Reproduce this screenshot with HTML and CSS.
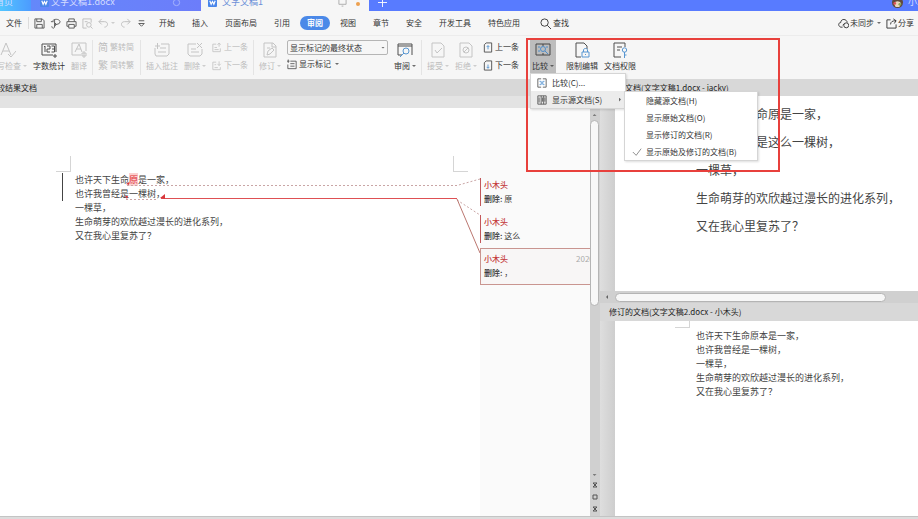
FILE: index.html
```html
<!DOCTYPE html>
<html lang="zh-CN">
<head>
<meta charset="utf-8">
<title>文字文稿1</title>
<link rel="stylesheet" href="styles.css">
</head>
<body>
<svg class="defs" aria-hidden="true">
  <symbol id="wdoc" viewBox="0 0 10 10"><rect width="10" height="10" rx="1" fill="#4a86ea" stroke="none"/><path d="M2 3l1.500 4L5 4l1.500 3L8 3" fill="none" stroke="#fff" stroke-width="1.300"/></symbol>
  <symbol id="prev" viewBox="0 0 12 12"><path d="M5 2H1v9h9V7M3 6h3M3 8.500h5M8.500 5V1M6.500 2.500l2-1.700 2 1.700"/></symbol>
  <symbol id="next" viewBox="0 0 12 12"><path d="M5 2H1v9h9V8M3 5h2M3 8.500h4M8.500 1v5M6.500 4l2 2 2-2"/></symbol>
  <symbol id="pageprev" viewBox="0 0 10 12"><path d="M3 1h6v10H1V3z"/><path d="M5 8V4M3.500 5.500L5 4l1.500 1.500" class="blue"/></symbol>
  <symbol id="pagenext" viewBox="0 0 10 12"><path d="M3 1h6v10H1V3z"/><path d="M5 5v4M3.500 7.500L5 9l1.500-1.500" class="blue"/></symbol>
</svg>

<header class="titlebar">
  <a class="home" href="#">首页</a>
  <a class="doctab" href="#"><svg class="i9"><use href="#wdoc"/></svg><span>文字文稿1.docx</span><svg class="i9 end" viewBox="0 0 10 10"><circle cx="5" cy="5" r="3.500"/></svg></a>
  <a class="doctab current" href="#"><svg class="i9"><use href="#wdoc"/></svg><span>文字文稿1</span><svg class="i9 end" viewBox="0 0 10 10"><path d="M1 1h8v6H1zM4 9h2"/></svg><i class="dot"></i></a>
  <button class="plus" aria-label="新建"><svg viewBox="0 0 10 10"><path d="M5 0v10M0 5h10"/></svg></button>
  <div class="user"><svg viewBox="0 0 12 12"><circle cx="6" cy="6" r="6" fill="#604a3c"/><path d="M2 7c2-3 6-3 8 0l-2 4H4z" fill="#e9d7bd"/><circle cx="3" cy="7" r="1.500" fill="#d9525a"/><circle cx="8.500" cy="8" r="1.500" fill="#88a452"/></svg><span>小木头</span></div>
</header>

<nav class="menubar">
  <a class="file" href="#"><svg class="i9" viewBox="0 0 10 10"><path d="M0 1.500h8M0 5h8M0 8.500h8"/></svg>文件</a>
  <div class="quick">
    <button aria-label="保存"><svg viewBox="0 0 12 12"><path d="M1 1h8l2 2v8H1zM3 1v3h5V1M3 11V7h6v4"/></svg></button>
    <button aria-label="输出"><svg viewBox="0 0 12 12"><path d="M3 3c1-2 7-2.500 8 1 0 3-4 3-6 3M5 2v8c-1 2-3 1-3-1M1 4h3M5 5l2 2-2 2"/></svg></button>
    <button aria-label="打印"><svg viewBox="0 0 12 12"><path d="M3 4V1h6v3M3 9H1V4h10v5H9M3 7h6v4H3z"/></svg></button>
    <button class="dim" aria-label="预览"><svg viewBox="0 0 12 12"><path d="M5 11H1V1h9v4M3 4h3"/><circle cx="7.500" cy="7.500" r="2.500"/><path d="M9.500 9.500l2 2"/></svg></button>
    <button class="dim undo" aria-label="撤销"><svg viewBox="0 0 12 12"><path d="M4 1L1 4l3 3M1 4h6c5 0 4 6 0 6"/></svg><i class="caret"></i></button>
    <button class="dim" aria-label="恢复"><svg viewBox="0 0 12 12"><path d="M8 1l3 3-3 3M11 4H5c-5 0-4 6 0 6"/></svg></button>
    <button class="more" aria-label="更多"><svg viewBox="0 0 12 12"><path d="M3 3h6M3 6l3 3 3-3z"/></svg></button>
  </div>
  <div class="tabs">
    <a href="#">开始</a><a href="#">插入</a><a href="#">页面布局</a><a href="#">引用</a><a href="#" class="on">审阅</a><a href="#">视图</a><a href="#">章节</a><a href="#">安全</a><a href="#">开发工具</a><a href="#">特色应用</a>
  </div>
  <button class="find"><svg viewBox="0 0 12 12"><circle cx="5" cy="5" r="4"/><path d="M8 8l4 4"/></svg>查找</button>
  <div class="share">
    <button><svg viewBox="0 0 12 12"><path d="M5 10H3C0 9 0 5 3 5c0-5 7-4 7 0"/><circle cx="9" cy="8" r="2.700"/><path d="M5 8l2-2"/></svg>未同步<i class="caret"></i></button>
    <button><svg viewBox="0 0 12 12"><path d="M5 2H1v9h10V7M5 7c0-3 2-4 6-4M8 1l3 2-2 3"/></svg>分享</button>
  </div>
</nav>

<section class="ribbon">
  <div class="group first">
    <button class="big dim"><svg viewBox="0 0 16 16"><path d="M1 13L6 1l5 12M3 9h6M8 12l3 3 5-6"/></svg><span>拼写检查<i class="caret"></i></span></button>
    <button class="big"><svg viewBox="0 0 16 16"><path d="M12 13H1V2h14v8M3 5l1-1v6M6 4h3v3H6v3h3M10.500 4h3v6h-3M11 7h2M14 12v4M12 14h4"/></svg><span>字数统计</span></button>
    <button class="big dim"><svg viewBox="0 0 16 16"><path d="M10 13H1V1h14v8M4 10l4-8 3 8M5 7h5M11 11h4v3h-4zM13 9v7"/></svg><span>翻译</span></button>
  </div>
  <div class="group stack">
    <button class="small dim"><b>简</b>繁转简</button>
    <button class="small dim"><b>繁</b>简转繁</button>
  </div>
  <div class="group">
    <button class="big dim"><svg viewBox="0 0 16 16"><path d="M7 2h8v10l-2 2H2l-1-2V6M1 4h5M3.500 1v6M6 6h6M4 10h8"/></svg><span>插入批注</span></button>
    <button class="big dim"><svg viewBox="0 0 16 16"><path d="M9 2H1v10l2 2h10l2-2V7M4 7h5M4 10h8M10 1l5 5M15 1l-5 5"/></svg><span>删除<i class="caret"></i></span></button>
    <div class="stack">
      <button class="small dim"><svg><use href="#prev"/></svg>上一条</button>
      <button class="small dim"><svg><use href="#next"/></svg>下一条</button>
    </div>
  </div>
  <div class="group">
    <button class="big dim"><svg viewBox="0 0 16 16"><path d="M2 1h9l3 3v11H2zM10 1v4h4M5 13l1-4 4-3 2 2-4 4zM5 6h3"/></svg><span>修订<i class="caret"></i></span></button>
    <div class="stack markup">
      <div class="pick"><select aria-label="标记状态"><option>显示标记的最终状态</option></select><i class="caret"></i></div>
      <button class="small"><svg viewBox="0 0 12 12"><path d="M4 2h7v9H1V6M0 2h3M1.500 0v4M4 5h5M4 8h5"/></svg>显示标记<i class="caret"></i></button>
    </div>
    <button class="big"><svg viewBox="0 0 16 16"><path d="M5 13H1V2h14v11M1 4h14"/><circle cx="9" cy="9" r="3" class="blue"/><path d="M7 11l-4 4" class="blue"/></svg><span>审阅<i class="caret"></i></span></button>
  </div>
  <div class="group last">
    <button class="big dim"><svg viewBox="0 0 16 16"><path d="M2 1h9l3 3v11H2zM5 8l2 3 5-5"/></svg><span>接受<i class="caret"></i></span></button>
    <button class="big dim"><svg viewBox="0 0 16 16"><path d="M2 1h9l3 3v11H2z"/><circle cx="8" cy="8" r="3"/><path d="M6 10l4-4"/></svg><span>拒绝<i class="caret"></i></span></button>
    <div class="stack">
      <button class="small"><svg><use href="#pageprev"/></svg>上一条</button>
      <button class="small"><svg><use href="#pagenext"/></svg>下一条</button>
    </div>
  </div>
  <div class="compare">
    <button class="big pressed"><svg viewBox="0 0 16 16"><path d="M1 2h14v11H1zM8 2v2M8 11v2"/><circle cx="8" cy="7" r="2.500" class="blue"/><path d="M10 9l3 3M3 5h2M3 9h2M11 5h2" class="blue"/></svg><span>比较<i class="caret"></i></span></button>
    <div class="menu main-menu">
      <button><svg viewBox="0 0 12 12"><path d="M5 1H1v10h4M7 1h4v10H7"/><path d="M3 4h2v4H3M9 4H7v4h2M5 6h2" class="blue"/></svg>比较(C)...</button>
      <button class="hot"><svg viewBox="0 0 12 12"><path d="M1 1h10v10H1zM5 1v10M8 1v10M2.500 3v6M6.500 3v5M9.500 3v5"/></svg>显示源文档(S)<i class="caret side"></i></button>
    </div>
    <div class="menu sub-menu">
      <button>隐藏源文档(H)</button>
      <button>显示原始文档(O)</button>
      <button>显示修订的文档(R)</button>
      <button><svg viewBox="0 0 12 12"><path d="M1 6l4 4 6-8"/></svg>显示原始及修订的文档(B)</button>
    </div>
    <div class="highlight"></div>
  </div>
  <div class="group tail">
    <button class="big"><svg viewBox="0 0 16 16"><path d="M7 15H2V1h8l3 3v3"/><path d="M8 10h7v5H8zM9.500 10V8c0-2 4-2 4 0v2M11.500 12v1" class="blue"/></svg><span>限制编辑</span></button>
    <button class="big"><svg viewBox="0 0 16 16"><path d="M9 15H2V1h11v4M5 5h5M5 8h3"/><circle cx="12.500" cy="8" r="2.200" class="blue"/><path d="M12.500 10v6M12.500 13h2" class="blue"/></svg><span>文档权限</span></button>
  </div>
</section>

<main class="work">
  <section class="result">
    <h2>比较结果文档</h2>
    <div class="ruler"></div>
    <div class="canvas">
      <article class="page">
        <div class="corners"><i></i><i></i></div>
        <div class="text changed">
          <p>也许天下生命<del>原</del>是一家，</p>
          <p>也许我曾经是一棵树，</p>
        </div>
        <div class="text">
          <p>一棵草，</p>
          <p>生命萌芽的欢欣越过漫长的进化系列，</p>
          <p>又在我心里复苏了？</p>
        </div>
      </article>
      <aside class="notes">
        <div class="note"><div><strong>小木头</strong><p><b>删除:</b> 原</p></div></div>
        <div class="note"><div><strong>小木头</strong><p><b>删除:</b> 这么</p></div></div>
        <div class="note active"><div><strong>小木头</strong><time>2020</time><p><b>删除:</b> ，</p></div></div>
      </aside>
      <svg class="links" viewBox="0 0 480 200">
        <path d="M127 77.500H457L480 71M126 91.500h31M457 92l23 15" class="dots"/>
        <path d="M161 90.500H457" class="red"/>
        <path d="M457 91l23 54" class="brown"/>
        <path d="M160 90l5-4v5zM125 88l3 0-1 3zM126 76l3-2v3z" class="mark"/>
      </svg>
    </div>
  </section>
  <div class="vbar">
    <i class="caret up"></i><div class="thumb"></div>
    <div class="steps"><i class="caret"></i><svg viewBox="0 0 6 6"><path d="M1 1h4L1 5h4z"/></svg><svg viewBox="0 0 6 6"><path d="M1 1h4v4H1z"/></svg><svg viewBox="0 0 6 6"><path d="M1 1h4L1 5h4z"/></svg></div>
  </div>
  <section class="sources">
    <h2>原始文档(文字文稿1.docx - jacky)</h2>
    <article class="sheet large">
      <p>也许天下生命原是一家，</p>
      <p>也许我曾经是这么一棵树，</p>
      <p>一棵草，</p>
      <p>生命萌芽的欢欣越过漫长的进化系列，</p>
      <p>又在我心里复苏了？</p>
    </article>
    <div class="hbar"><i class="caret back"></i><div class="thumb"></div></div>
    <h2 class="second">修订的文档(文字文稿2.docx - 小木头)</h2>
    <article class="sheet">
      <i class="corner"></i>
      <div class="text">
        <p>也许天下生命原本是一家，</p>
        <p>也许我曾经是一棵树，</p>
        <p>一棵草，</p>
        <p>生命萌芽的欢欣越过漫长的进化系列，</p>
        <p>又在我心里复苏了？</p>
      </div>
    </article>
  </section>
</main>
<footer class="foot"></footer>
</body>
</html>
```
FILE: styles.css
```css
* { box-sizing: border-box; margin: 0; padding: 0; }

body {
  display: flex;
  flex-direction: column;
  height: 100vh;
  overflow: hidden;
  background: #f6f6f6;
  color: #333;
  font: 8px/12px "Noto Sans CJK SC", sans-serif;
  white-space: nowrap;
}

a { color: inherit; text-decoration: none; }
button { border: 0; background: none; color: inherit; font: inherit; display: flex; align-items: center; }
svg { fill: none; stroke: currentColor; stroke-width: 1; flex: none; }
.blue { stroke: #3c86cc; }
.dim { color: #bcbcbc; }
.defs { display: none; }
.i9 { width: 9px; height: 9px; }

.caret {
  flex: none;
  display: inline-block;
  width: 4px;
  height: 2px;
  margin-left: 2px;
  background: currentColor;
  clip-path: polygon(0 0, 100% 0, 50% 100%);
  opacity: 0.7;
  vertical-align: 2px;
}

/* Title bar: only the lower half of the tabs is in view */
.titlebar {
  flex: none;
  display: flex;
  align-items: flex-end;
  height: 11px;
  overflow: hidden;
  background: #587bff;
  color: #d3dcff;
  font-size: 9px;
}
.titlebar > * { height: 18px; display: flex; align-items: center; }
.home { width: 31px; padding-right: 18px; justify-content: flex-end; background: linear-gradient(90deg, #53c6ff, #4c9bff); }
.doctab { width: 170px; padding: 0 20px 0 9px; gap: 2px; background: linear-gradient(90deg, #6488fa, #6c7dfa); }
.doctab .end { margin-left: auto; opacity: 0.6; }
.current { width: 168px; padding: 0 9px 0 7px; gap: 5px; background: #f6f6f6; color: #6d8fd8; }
.current .end { color: #777; }
.dot { width: 4px; height: 4px; margin: 4px 0 0 4px; border-radius: 2px; background: #eda04f; }
.plus { padding: 0 9px; color: #fff; }
.plus svg { width: 9px; height: 9px; }
.user { margin-left: auto; gap: 5px; width: 26px; overflow: hidden; }
.user svg { width: 11px; height: 11px; stroke: none; }

/* Menu row */
.menubar { flex: none; display: flex; align-items: center; height: 24px; background: #f6f6f6; }
.menubar svg { width: 11px; height: 11px; }
.file { display: flex; align-items: center; width: 29px; margin-left: -9px; gap: 4px; }
.file, .quick { height: 12px; }
.quick { display: flex; align-items: center; gap: 5px; margin-left: 8px; padding-left: 5px; border-left: 1px solid #dcdcdc; color: #555; }
.quick .dim { color: #bcbcbc; }
.tabs { display: flex; gap: 3px; margin-left: 5px; }
.tabs a { padding: 0 7px; line-height: 14px; border-radius: 7px; }
.tabs .on { background: #4b89e8; color: #fff; font-weight: 700; }
.find { margin-left: 13px; gap: 2px; }
.share { display: flex; gap: 5px; margin-left: auto; padding-right: 4px; }
.share button { gap: 1px; }

/* Ribbon */
.ribbon { flex: none; display: flex; height: 44px; padding: 4px 0; border-top: 1px solid #ececec; background: #f6f6f6; }
.ribbon svg { opacity: 0.85; }
.group { display: flex; gap: 6px; padding: 0 5px; border-right: 1px solid #e4e4e4; }
.group.first { margin-left: -16px; }
.group.last, .group.tail { border-right: 0; }
.group.tail { padding-left: 10px; }
.big { flex-direction: column; gap: 2px; height: 33px; padding-top: 2px; }
.big svg { width: 16px; height: 16px; }
.stack { display: flex; flex-direction: column; gap: 4px; }
.small { gap: 2px; height: 14px; }
.small svg { width: 10px; height: 11px; }
.small b { font-size: 10px; font-weight: 400; }
.group.stack { padding-right: 6px; }
.markup { gap: 2px; }
.pick { display: flex; align-items: center; width: 101px; height: 15px; padding-right: 2px; border: 1px solid #b5b5b5; border-radius: 2px; }
.pick select { flex: 1; appearance: none; border: 0; background: none; color: inherit; font: inherit; padding-left: 2px; }

.compare { position: relative; padding-left: 6px; }
.pressed { width: 26px; background: #bdbdbd; }
.menu { position: absolute; z-index: 3; border: 1px solid #d5d5d5; background: #fff; box-shadow: 1px 1px 2px #0002; }
.main-menu { top: 33px; left: 6px; width: 96px; }
.main-menu button { width: 100%; height: 17px; padding-left: 6px; gap: 5px; }
.menu svg { width: 10px; height: 10px; }
.main-menu .hot { background: #ececec; }
.side { width: 2px; height: 4px; margin: 0 4px 0 auto; clip-path: polygon(0 0, 100% 50%, 0 100%); }
.sub-menu { z-index: 4; top: 51px; left: 100px; width: 134px; }
.sub-menu button { width: 100%; height: 17px; padding-left: 21px; }
.sub-menu svg { margin: 0 4px 0 -14px; color: #666; }
.highlight { position: absolute; z-index: 5; top: -2px; left: 2px; width: 254px; height: 134px; border: 2px solid #e8403c; pointer-events: none; }

/* Work area */
.work { flex: 1; min-height: 0; display: grid; grid-template-columns: minmax(0, 1fr) 10px 318px; }
h2 { flex: none; height: 17px; font-size: 8px; font-weight: 400; line-height: 17px; background: #d8d8d8; color: #222; }
.result { display: flex; flex-direction: column; min-width: 0; }
.result h2 { text-indent: -11px; overflow: hidden; }
.ruler { flex: none; height: 12px; background: #e3e3e3; }
.canvas { position: relative; flex: 1; display: flex; background: #fff; }
.page { flex: 1; padding-top: 48px; }
.corners { display: flex; justify-content: space-between; margin: 0 11px 0 56px; }
.corners i, .corner { width: 15px; height: 16px; border: solid #d5d5d5; border-width: 0 1px 1px 0; }
.corners i + i { border-width: 0 0 1px 1px; margin-right: 1px; }
.text { font-size: 9px; line-height: 14px; color: #444; }
.page .text { margin-left: 62px; padding-left: 13px; }
.changed { position: relative; margin-top: 1px; border-left: 1px solid #444; }
.page .changed { padding-left: 12px; }
del { color: #e02f35; background: #fbd0d0; text-decoration: none; }

.notes { width: 110px; padding-top: 66px; background: #fafafa; }
.note { height: 37px; padding: 4px 0; }
.note > div { display: grid; grid-template-columns: 1fr auto; line-height: 14px; padding-left: 3px; border-left: 1px solid #c2575a; }
.note strong { color: #c43a3c; font-weight: 500; }
.note p { grid-column: 1 / -1; }
.note b { font-weight: 500; }
.note.active { border: 1px solid #c99590; border-right: 0; padding: 3px 0; background: #f8f6f6; overflow: hidden; }
.note.active > div { border-left: 0; }
time { width: 14px; overflow: hidden; color: #aaa; }

.links { position: absolute; top: 0; right: 110px; width: 480px; height: 200px; }
.dots { stroke: #c9a5a5; stroke-dasharray: 2 2; }
.red { stroke: #de5054; }
.brown { stroke: #bb7770; }
.mark { fill: #d9383c; stroke: none; }

.vbar { display: flex; flex-direction: column; align-items: center; padding: 35px 1px 4px 0; background: #d0d0d0; color: #555; }
.vbar .caret, .hbar .caret { margin: 0; }
.up { clip-path: polygon(50% 0, 100% 100%, 0 100%); }
.thumb { border: 1px solid #b4b4b4; border-radius: 5px; background: #f7f7f7; }
.vbar .thumb { width: 9px; height: 186px; margin-top: 4px; }
.steps { display: flex; flex-direction: column; align-items: center; gap: 6px; margin-top: auto; }
.steps svg { width: 6px; height: 6px; }

.sources { display: grid; grid-template-rows: 17px 1fr 12px 18px 1fr; min-width: 0; min-height: 0; background: linear-gradient(90deg, #dedede, #cecece 15px); }
.sources h2 { padding-left: 9px; }
.sources .second { height: 18px; }
.sheet { min-height: 0; margin-left: 15px; background: #fff; color: #444; overflow: hidden; }
.large { padding: 4px 0 0 81px; font-size: 12px; line-height: 28px; }
.hbar { display: flex; align-items: center; gap: 5px; padding-left: 6px; background: #d0d0d0; }
.hbar .thumb { width: 271px; height: 9px; }
.back { width: 2px; height: 4px; clip-path: polygon(0 50%, 100% 0, 100% 100%); }
.hbar .back { margin-right: 2px; }
.corner { display: block; height: 7px; margin-left: 60px; }
.sheet .text { padding: 1px 0 0 81px; }
.foot { flex: none; height: 3px; background: #dcdcdc; border-top: 1px solid #c4c4c4; }
```
